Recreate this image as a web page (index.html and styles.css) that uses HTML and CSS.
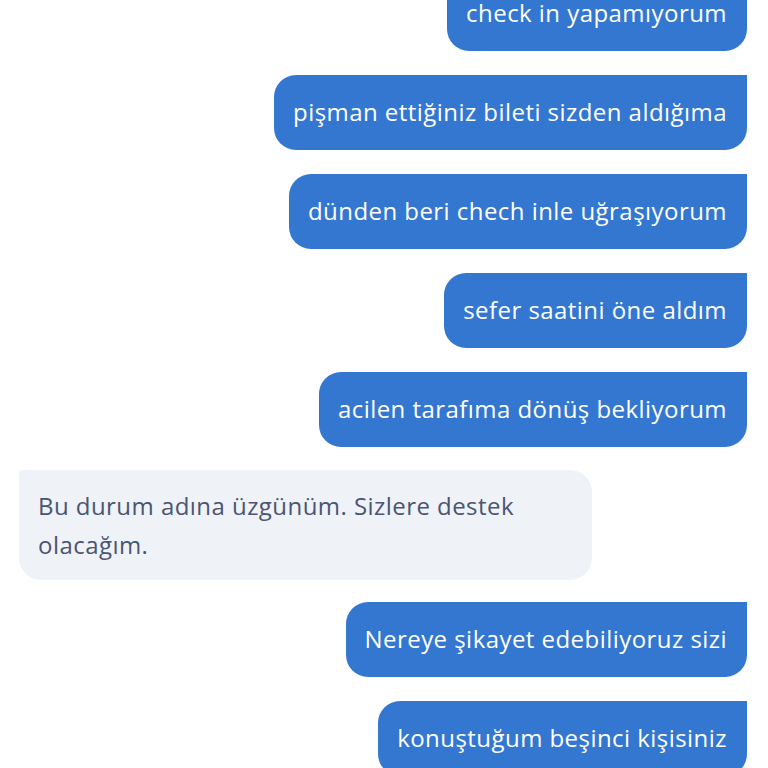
FILE: index.html
```html
<!DOCTYPE html>
<html lang="tr">

<head>
    <meta charset="UTF-8">
    <meta name="viewport" content="width=device-width, initial-scale=1.0">
    <title>Destek</title>
    <link rel="stylesheet" href="styles.css">
</head>

<body>
    <div class="chat">
        <div class="msg out">check in yapamıyorum</div>
        <div class="msg out">pişman ettiğiniz bileti sizden aldığıma</div>
        <div class="msg out">dünden beri chech inle uğraşıyorum</div>
        <div class="msg out">sefer saatini öne aldım</div>
        <div class="msg out">acilen tarafıma dönüş bekliyorum</div>
        <div class="msg in">Bu durum adına üzgünüm. Sizlere destek olacağım.</div>
        <div class="msg out">Nereye şikayet edebiliyoruz sizi</div>
        <div class="msg out">konuştuğum beşinci kişisiniz</div>
    </div>
</body>

</html>
```

FILE: styles.css
```css
body {
    margin: 0;
    background-color: #fff;
    font-family: "Open Sans", Lato, sans-serif;
    overflow: hidden;
}
.chat {
    display: flex;
    flex-direction: column;
    gap: 24px;
    padding: 0 21px 0 19px;
    margin-top: -24px;
}
.msg {
    font-size: 24px;
    letter-spacing: 0.45px;
    line-height: 38px;
    padding: 18px 20px 19px 19px;
    max-width: 534px;
}
.out {
    align-self: flex-end;
    background-color: #3477d0;
    color: #fff;
    border-radius: 22px 0 22px 22px;
}
.in {
    align-self: flex-start;
    width: 534px;
    margin: -1px 0 -2px;
    line-height: 39px;
    padding-top: 16px;
    padding-bottom: 16px;
    background-color: #eff2f7;
    color: #4b5572;
    border-radius: 4px 22px 22px 22px;
}
```
